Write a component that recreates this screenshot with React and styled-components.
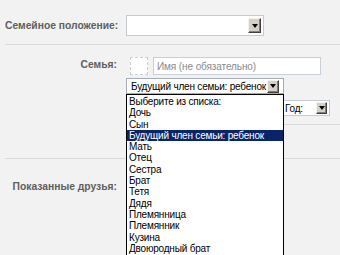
import styled, { createGlobalStyle } from "styled-components";

const GlobalStyle = createGlobalStyle`
  html, body {
    margin: 0;
    padding: 0;
    background: #f2f2f2;
  }
  body {
    width: 340px;
    height: 255px;
    overflow: hidden;
    font-family: "Liberation Sans", Arial, sans-serif;
  }
`;

const Form = styled.div`
  position: relative;
  margin-left: 5px;
`;

const Row = styled.div`
  display: flex;
  align-items: flex-start;
  padding: ${(p) => p.$pad || "0"};
  border-bottom: ${(p) => (p.$line ? "1px solid #dadada" : "none")};
`;

const Label = styled.div`
  width: 112px;
  flex-shrink: 0;
  margin-right: 9px;
  padding-top: ${(p) => p.$top || 0}px;
  text-align: right;
  font-size: 10.3px;
  font-weight: bold;
  color: #5e5e5e;
  white-space: nowrap;
`;

const Controls = styled.div`
  flex: 1;
  display: flex;
  flex-direction: column;
`;

const SelectBox = styled.div`
  display: flex;
  align-items: center;
  justify-content: space-between;
  box-sizing: border-box;
  width: ${(p) => p.$w}px;
  height: ${(p) => p.$h}px;
  margin-top: ${(p) => p.$mt || 0}px;
  padding: 0 ${(p) => p.$inset || 2}px 0 4px;
  background: #fff;
  border: 1px solid ${(p) => p.$border || "#c7ccd3"};
  font-size: 10px;
  letter-spacing: -0.2px;
  color: #000;
  white-space: nowrap;
  overflow: hidden;
`;

const ArrowBtn = styled.div`
  box-sizing: border-box;
  width: ${(p) => p.$w || 12}px;
  height: ${(p) => p.$h || 13}px;
  flex-shrink: 0;
  display: flex;
  align-items: center;
  justify-content: center;
  background: #d4d0c8;
  border-top: 1px solid #f4f3ee;
  border-left: 1px solid #f4f3ee;
  border-right: 1px solid #404040;
  border-bottom: 1px solid #404040;
  box-shadow: inset -1px -1px 0 #808080;
`;

const Triangle = styled.span`
  width: 0;
  height: 0;
  border-left: 3.5px solid transparent;
  border-right: 3.5px solid transparent;
  border-top: 4px solid #000;
`;

const NameLine = styled.div`
  display: flex;
  gap: 5px;
  margin-left: 4px;
`;

const Photo = styled.div`
  box-sizing: border-box;
  width: 18px;
  height: 18px;
  background: #fff;
  border: 1px dashed #cfcfcf;
`;

const TextInput = styled.div`
  box-sizing: border-box;
  width: 168px;
  height: 18px;
  padding: 3px 3px 0;
  background: #fff;
  border: 1px solid #c9cfd8;
  font-size: 10px;
  letter-spacing: -0.1px;
  color: #8a8a8a;
`;

const Entry = styled.div`
  display: flex;
  flex-direction: column;
  padding: 12px 0 8px;
  border-bottom: 1px solid #dadada;
`;

const DateLine = styled.div`
  display: flex;
  justify-content: flex-end;
  margin-top: 6px;
  padding-right: 10px;
`;

const OpenList = styled.ul`
  position: absolute;
  left: 121px;
  top: 94px;
  width: 158px;
  height: 200px;
  box-sizing: border-box;
  margin: 0;
  padding: 1px 0 0;
  list-style: none;
  background: #fff;
  border: 1px solid #000;
  font-size: 10px;
  letter-spacing: -0.2px;
`;

const Option = styled.li`
  height: 11.3px;
  line-height: 11.3px;
  padding-left: 2px;
  white-space: nowrap;
  background: ${(p) => (p.$active ? "#0a246a" : "transparent")};
  color: ${(p) => (p.$active ? "#fff" : "#000")};
`;

const Arrow = ({ w, h }) => (
  <ArrowBtn $w={w} $h={h}>
    <Triangle />
  </ArrowBtn>
);

const options = [
  "Выберите из списка:",
  "Дочь",
  "Сын",
  "Будущий член семьи: ребенок",
  "Мать",
  "Отец",
  "Сестра",
  "Брат",
  "Тетя",
  "Дядя",
  "Племянница",
  "Племянник",
  "Кузина",
  "Двоюродный брат",
];

export default function App() {
  return (
    <>
      <GlobalStyle />
      <Form>
        <Row $pad="15px 0 8px" $line>
          <Label $top={5}>Семейное положение:</Label>
          <SelectBox $w={138} $h={21}>
            <span />
            <Arrow w={13} h={15} />
          </SelectBox>
        </Row>

        <Row $pad="0 0 33px" $line>
          <Label $top={14}>Семья:</Label>
          <Controls>
            <Entry>
              <NameLine>
                <Photo />
                <TextInput>Имя (не обязательно)</TextInput>
              </NameLine>
              <SelectBox $w={158} $h={16} $border="#a5acb5" $inset={4} $mt={3}>
                <span>Будущий член семьи: ребенок</span>
                <Arrow w={12} h={13} />
              </SelectBox>
              <DateLine>
                <SelectBox $w={50} $h={16}>
                  <span>Год:</span>
                  <Arrow w={11} h={12} />
                </SelectBox>
              </DateLine>
            </Entry>
          </Controls>
        </Row>

        <Row $pad="22px 0 20px">
          <Label>Показанные друзья:</Label>
        </Row>

        <OpenList>
          {options.map((o) => (
            <Option key={o} $active={o.startsWith("Будущий")}>
              {o}
            </Option>
          ))}
        </OpenList>
      </Form>
    </>
  );
}
